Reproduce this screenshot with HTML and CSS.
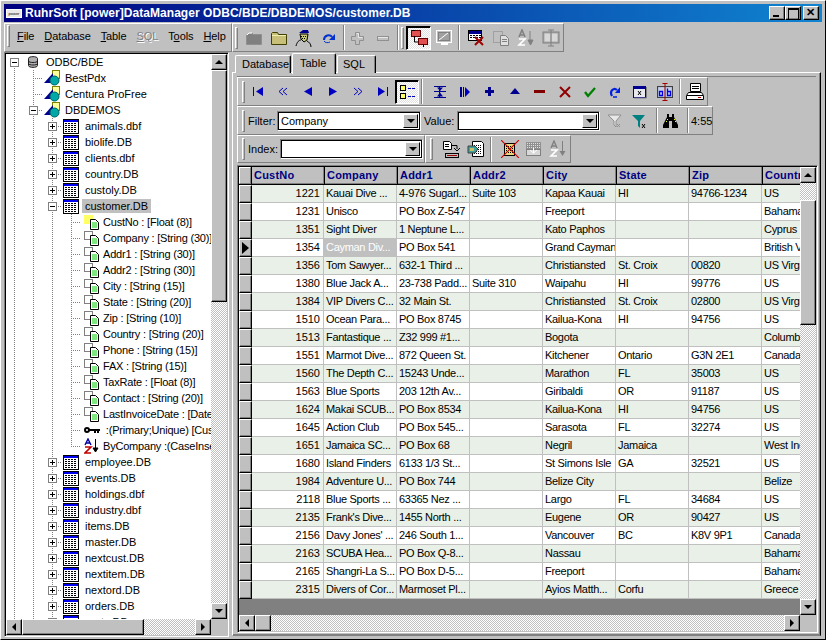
FILE: index.html
```html
<!DOCTYPE html>
<html lang="en">
<head>
<meta charset="utf-8">
<title>RuhrSoft [power]DataManager</title>
<link rel="stylesheet" href="styles.css">
</head>
<body>
<svg class="defs" xmlns="http://www.w3.org/2000/svg">
<symbol id="db" viewBox="0 0 10 12"><path d="M.5 2.500C.5 0 9.500 0 9.500 2.500v7c0 2.500-9 2.500-9 0z" fill="#b0b0b0" stroke="#202020"/><path d="M.5 5c0 2 9 2 9 0M.5 7.500c0 2 9 2 9 0" fill="none" stroke="#202020"/></symbol>
<symbol id="srv" viewBox="0 0 16 16"><rect x="8.500" y="0.500" width="7" height="8" fill="#ffff99" stroke="#808000"/><path d="M0 13 9 3v10z" fill="#000090"/><circle cx="10.500" cy="10.500" r="4.500" fill="#00a8a8" stroke="#006060"/></symbol>
<symbol id="tbl" viewBox="0 0 16 16"><rect x="0.500" y="1.500" width="15" height="14" fill="#fff" stroke="#000"/><rect x="1" y="2" width="14" height="2" fill="#0000f0"/><path d="M2 5.500h12M2 7.500h12M2 9.500h12M2 11.500h12M2 13.500h12" stroke="#000" stroke-dasharray="2 1"/></symbol>
<symbol id="fld" viewBox="0 0 16 16"><rect x="0.500" y="1.500" width="8" height="8" fill="none" stroke="#000" stroke-dasharray="1 1"/><path d="M6.500 5.500h5l3 3v7h-8z" fill="#fff" stroke="#000"/><path d="M8 9h5M8 11h5M8 13h5" stroke="#00d000" stroke-width="1.200"/></symbol>
<symbol id="fldy" viewBox="0 0 16 16"><rect x="0" y="1" width="9" height="9" fill="#ffff66"/><path d="M6.500 5.500h5l3 3v7h-8z" fill="#fff" stroke="#000"/><path d="M8 9h5M8 11h5M8 13h5" stroke="#00d000" stroke-width="1.200"/></symbol>
<symbol id="key" viewBox="0 0 16 16"><circle cx="3" cy="8" r="2" fill="none" stroke="#000" stroke-width="2"/><path d="M5 7h11v2h-1v2h-2V9h-1v2h-2V9H5z"/></symbol>
<symbol id="azt" viewBox="0 0 16 16"><path d="M1 7 4 1l3 6M2.500 5h3" fill="none" stroke="#0000a0" stroke-width="1.400"/><path d="M1 9h6L1 15h6" fill="none" stroke="#c00000" stroke-width="1.600"/><path d="M11.500 1v10M9 10h5l-2.500 4z" stroke="#000"/></symbol>
<symbol id="fgray" viewBox="0 0 18 18"><path d="M1.500 6.500l2-2h4l1 1h8v10h-15z" fill="#808080" stroke="#909090"/><path d="M2 6 4 4h3" fill="none" stroke="#fff"/></symbol>
<symbol id="fopen" viewBox="0 0 18 18"><path d="M1.500 4.500l1-1h5l1 2h8v10h-15z" fill="#c8c078" stroke="#404000"/><path d="M2 6.500h14" stroke="#f0f0b0"/></symbol>
<symbol id="man" viewBox="0 0 18 18"><path d="M4 4 8 1h5l1 3z" fill="#000090"/><path d="M5 5h8l-1 6-3 2-3-3z" fill="#c8c878" stroke="#000"/><path d="M6 7.500h5M7 9.500h4" stroke="#000" stroke-dasharray="1 1"/><path d="M1 17c1-4 3-6 5-6M12 12c2 1 4 3 4 6" fill="none" stroke="#000"/></symbol>
<symbol id="redo" viewBox="0 0 16 16"><path d="M3 10C3 5 9 4 11 7" fill="none" stroke="#0030d0" stroke-width="2"/><path d="M14 4v6H8z" fill="#0030d0"/><path d="M3 11c1 2 4 2 6 1" fill="none" stroke="#0030d0"/></symbol>
<symbol id="pdis" viewBox="0 0 16 16"><path d="M5.500 2.500h4v4h4v4h-4v4h-4v-4h-4v-4h4z" fill="#c0c0c0" stroke="#909090"/><path d="M6.500 3.500h2v4h4" fill="none" stroke="#e8e8e8"/></symbol>
<symbol id="mdis" viewBox="0 0 16 16"><rect x="2.500" y="6.500" width="11" height="4" fill="#c0c0c0" stroke="#909090"/><path d="M3 7.500h10" stroke="#e8e8e8"/></symbol>
<symbol id="ftree" viewBox="0 0 18 18"><rect x="1.500" y="1.500" width="9" height="6" fill="#e05050" stroke="#600000"/><rect x="8.500" y="9.500" width="9" height="6" fill="#e05050" stroke="#600000"/><path d="M4.500 7v6H8M13.500 15v3M2 1.500h3" fill="none" stroke="#000"/></symbol>
<symbol id="mon" viewBox="0 0 18 18"><rect x="1.500" y="1.500" width="15" height="12" fill="#c0c0c0" stroke="#fff"/><rect x="3.500" y="3.500" width="11" height="8" fill="#a0a0a0" stroke="#808080"/><path d="M4 11 13 4" stroke="#fff"/><path d="M6 15h7" stroke="#fff" stroke-width="2"/></symbol>
<symbol id="tblx" viewBox="0 0 18 18"><rect x="1.500" y="1.500" width="13" height="10" fill="#fff" stroke="#000"/><rect x="2" y="2" width="12" height="3" fill="#000090"/><path d="M3 6.500h11M3 8.500h11" stroke="#000" stroke-dasharray="2 1"/><path d="M8 8l8 8M16 8l-8 8" stroke="#a00000" stroke-width="2"/></symbol>
<symbol id="ddis" viewBox="0 0 18 18"><rect x="1.500" y="2.500" width="9" height="11" fill="none" stroke="#808080" stroke-dasharray="1 1"/><path d="M8.500 6.500h5l3 3v7h-8z" fill="#e0e0e0" stroke="#808080"/><path d="M10 10.500h5M10 12.500h5" stroke="#808080"/></symbol>
<symbol id="azd" viewBox="0 0 18 18"><path d="M2 8 5 1l3 7M3 6h4" fill="none" stroke="#808080" stroke-width="1.600"/><path d="M2 10h6l-6 6h6" fill="none" stroke="#fff" stroke-width="1.600"/><path d="M13 2v10M11 11h5l-2.500 5z" stroke="#808080" fill="#808080"/></symbol>
<symbol id="abd" viewBox="0 0 18 18"><rect x="1" y="3" width="16" height="11" fill="#a8a8a8" stroke="#808080"/><rect x="2.500" y="4.500" width="6" height="8" fill="#d8d8d8"/><rect x="9.500" y="4.500" width="6" height="8" fill="#d8d8d8"/><path d="M9 1v16M6 17h6M6 1h6" stroke="#808080"/></symbol>
<symbol id="first" viewBox="0 0 12 12"><path d="M1 1h1v9H1zM11 1v9L4 5.500z" fill="#0000c0"/></symbol>
<symbol id="prior" viewBox="0 0 12 12"><path d="M6 2 2 5.500 6 9M10 2 6 5.500 10 9" fill="none" stroke="#0000c0"/></symbol>
<symbol id="prev" viewBox="0 0 12 12"><path d="M10 1v9L2 5.500z" fill="#0000c0"/></symbol>
<symbol id="nxt" viewBox="0 0 12 12"><path d="M2 1v9l8-4.500z" fill="#0000c0"/></symbol>
<symbol id="nxtp" viewBox="0 0 12 12"><path d="M2 2 6 5.500 2 9M6 2l4 3.500L6 9" fill="none" stroke="#0000c0"/></symbol>
<symbol id="last" viewBox="0 0 12 12"><path d="M1 1v9l7-4.500zM10 1h1v9h-1z" fill="#0000c0"/></symbol>
<symbol id="tmark" viewBox="0 0 18 18"><rect x="2.500" y="2.500" width="5" height="5" fill="#ffff66" stroke="#000"/><rect x="2.500" y="10.500" width="5" height="5" fill="#ffff66" stroke="#000"/><path d="M10 5.500h7M10 13.500h7" stroke="#0000c0" stroke-dasharray="3 1"/></symbol>
<symbol id="ins" viewBox="0 0 16 16"><path d="M2 2.500h12M2 13.500h12M2 7.500h12" stroke="#000090"/><path d="M5 3.500h6L8 7zM5 12.500h6L8 8.500z" fill="#000090"/><path d="M7.500 2v12" stroke="#000090"/></symbol>
<symbol id="skip" viewBox="0 0 16 16"><path d="M3 3h2v10H3zM6 3h1v10H6z" fill="#000090"/><path d="M8 3v10l5-5z" fill="#0000c0"/></symbol>
<symbol id="add" viewBox="0 0 16 16"><path d="M6 3h3v3h3v3H9v3H6V9H3V6h3z" fill="#000090"/></symbol>
<symbol id="up" viewBox="0 0 16 16"><path d="M8 4 3 10h10z" fill="#000090"/></symbol>
<symbol id="del" viewBox="0 0 16 16"><rect x="2" y="6" width="11" height="3" fill="#800000"/></symbol>
<symbol id="cancel" viewBox="0 0 16 16"><path d="M3 3l10 10M13 3 3 13" stroke="#900000" stroke-width="2"/></symbol>
<symbol id="ok" viewBox="0 0 16 16"><path d="M3 8l3 4 7-8" fill="none" stroke="#008000" stroke-width="2.300"/></symbol>
<symbol id="ref" viewBox="0 0 16 16"><path d="M5 12C2 7 7 3 10 6" fill="none" stroke="#0020e0" stroke-width="2.200"/><path d="M13 3v6H8z" fill="#0020e0"/><path d="M6 13h4" stroke="#0020e0" stroke-width="1.500"/></symbol>
<symbol id="winx" viewBox="0 0 16 16"><rect x="1.500" y="2.500" width="12" height="11" fill="#e8e8f0" stroke="#000090"/><rect x="1" y="2" width="13" height="3" fill="#000090"/><path d="M6 7l3 4M9 7l-3 4" stroke="#000"/><path d="M14.500 3v11H2" fill="none" stroke="#808080"/></symbol>
<symbol id="ab" viewBox="0 0 18 18"><rect x="1.500" y="3.500" width="15" height="11" fill="#a0b0d0" stroke="#404040"/><rect x="2.500" y="4.500" width="6" height="9" fill="#c8d0e8"/><rect x="9.500" y="4.500" width="6" height="9" fill="#c8d0e8"/><path d="M9 0v18M6.500 .5h5M6.500 17.500h5" stroke="#a00000"/><path d="M3.500 8.500h3v4h-3zM11.500 5.500v7h3v-4h-3" fill="none" stroke="#0000e0" stroke-width="1.300"/></symbol>
<symbol id="prn" viewBox="0 0 20 20"><path d="M5.500 1.500h10v8h-10z" fill="#fff" stroke="#000"/><path d="M7 4.500h7M7 6.500h7" stroke="#000"/><path d="M3.500 10.500h13l2 3v4h-17v-4z" fill="#fff" stroke="#000"/><path d="M2 13.500h16" stroke="#000"/><path d="M13 15.500h3" stroke="#c00000"/></symbol>
<symbol id="fdis" viewBox="0 0 16 16"><path d="M1 2h13L9 8v6l-2-2V8z" fill="#e8e8e8" stroke="#909090"/><path d="M10 11l3 3M13 11l-3 3" stroke="#909090"/></symbol>
<symbol id="fen" viewBox="0 0 16 16"><path d="M0 2h13L8 8v7l-2-2V8z" fill="#008080"/><path d="M10 11l3 4M13 11l-3 4" stroke="#000"/></symbol>
<symbol id="bin" viewBox="0 0 16 16"><path d="M4 1h2v3h3V1h2v3l4 8v3H9V8H6v7H0v-3l4-8z" fill="#000"/><path d="M4 6h1v1H4zM11 6h1v1h-1zM3 8h1v1H3zM12 8h1v1h-1z" fill="#ff0"/></symbol>
<symbol id="idx1" viewBox="0 0 18 18"><path d="M1.500 1.500h6l2 2v6h-8z" fill="#fff" stroke="#000"/><path d="M3 4.500h4M3 6.500h4" stroke="#000"/><path d="M10 5.500h5V9M12 8l3 3 3-3" fill="none" stroke="#000"/><rect x="3.500" y="13.500" width="13" height="4" fill="#c0c0c0" stroke="#000"/><path d="M5 15.500h10" stroke="#a00000"/></symbol>
<symbol id="idx2" viewBox="0 0 18 18"><path d="M5.500 1.500h9l2 2v13h-11z" fill="#fff" stroke="#000"/><path d="M7 5.500h8M7 7.500h8M7 9.500h8M7 11.500h8M7 13.500h8" stroke="#000" stroke-dasharray="1 1"/><path d="M1 6h7l3 3-3 4H1z" fill="#40a0a0" stroke="#404040"/><path d="M3 8h4v3H3z" fill="#c8c060"/></symbol>
<symbol id="idx3" viewBox="0 0 18 18"><rect x="3.500" y="3.500" width="10" height="12" fill="#e8d880" stroke="#000"/><path d="M5 6.500h7M5 8.500h7M5 10.500h7M5 12.500h7" stroke="#000" stroke-dasharray="1 1"/><path d="M0 0l18 18M18 0 0 18" stroke="#d00000" stroke-width="1.200"/></symbol>
<symbol id="idx4" viewBox="0 0 18 18"><rect x="1" y="2" width="15" height="7" fill="#909090"/><path d="M2 3.500h13M2 5.500h13M2 7.500h13" stroke="#e0e0e0" stroke-dasharray="1 1"/><rect x="1.500" y="9.500" width="14" height="6" fill="#d8d8d8" stroke="#808080"/><path d="M8.500 8v5M5 10l3.500 3 3.500-3" fill="none" stroke="#fff"/></symbol>
<symbol id="idx5" viewBox="0 0 18 18"><path d="M2 8 5 1l3 7M3 6h4" fill="none" stroke="#808080" stroke-width="1.400"/><path d="M2 10h6l-6 6h6" fill="none" stroke="#fff" stroke-width="1.600"/><path d="M13.500 1v11" stroke="#808080"/><path d="M10.500 11h6l-3 5z" fill="#808080"/></symbol>
</svg>

<div class="win">
  <div class="title">
    <span class="logo">power</span>
    <span class="cap">RuhrSoft [power]DataManager ODBC/BDE/DBDEMOS/customer.DB</span>
    <span class="wbtns"><b class="wb wmin"></b><b class="wb wmax"></b><b class="wb wcl gap"></b></span>
  </div>

  <div class="topbar">
    <div class="band bmenu"><i class="grip"></i>
      <span class="mi"><u>F</u>ile</span><span class="mi"><u>D</u>atabase</span><span class="mi"><u>T</u>able</span><span class="mi dis"><u>S</u>QL</span><span class="mi">T<u>o</u>ols</span><span class="mi"><u>H</u>elp</span>
    </div>
    <div class="band btool"><i class="grip"></i>
      <span class="tbtn first"><svg class="ico18"><use href="#fgray"/></svg></span>
      <span class="tbtn"><svg class="ico18"><use href="#fopen"/></svg></span>
      <span class="tbtn"><svg class="ico18"><use href="#man"/></svg></span>
      <span class="tbtn"><svg class="ico16"><use href="#redo"/></svg></span>
      <i class="sep"></i>
      <span class="tbtn"><svg class="ico16"><use href="#pdis"/></svg></span>
      <span class="tbtn"><svg class="ico16"><use href="#mdis"/></svg></span>
      <i class="sep"></i><i class="grip"></i>
      <span class="tbtn pressed"><svg class="ico18"><use href="#ftree"/></svg></span>
      <span class="tbtn"><svg class="ico18"><use href="#mon"/></svg></span>
      <i class="sep s3"></i>
      <span class="tbtn"><svg class="ico18"><use href="#tblx"/></svg></span>
      <span class="tbtn"><svg class="ico18"><use href="#ddis"/></svg></span>
      <span class="tbtn"><svg class="ico18"><use href="#azd"/></svg></span>
      <span class="tbtn"><svg class="ico18"><use href="#abd"/></svg></span>
    </div>
  </div>

  <div class="main">
    <div class="treewrap">
      <div class="treemid">
        <div class="tree">
          <div class="r l0"><i class="c dn"><b class="bx minus"></b></i><svg class="ic"><use href="#db"/></svg>ODBC/BDE</div>
          <div class="r l1"><i class="c v"></i><i class="c t"></i><svg class="ic"><use href="#srv"/></svg>BestPdx</div>
          <div class="r l1"><i class="c v"></i><i class="c t"></i><svg class="ic"><use href="#srv"/></svg>Centura ProFree</div>
          <div class="r l1"><i class="c v"></i><i class="c t"><b class="bx minus"></b></i><svg class="ic"><use href="#srv"/></svg>DBDEMOS</div>
          <div class="r l2"><i class="c v"></i><i class="c v"></i><i class="c t"><b class="bx plus"></b></i><svg class="ic"><use href="#tbl"/></svg>animals.dbf</div>
          <div class="r l2"><i class="c v"></i><i class="c v"></i><i class="c t"><b class="bx plus"></b></i><svg class="ic"><use href="#tbl"/></svg>biolife.DB</div>
          <div class="r l2"><i class="c v"></i><i class="c v"></i><i class="c t"><b class="bx plus"></b></i><svg class="ic"><use href="#tbl"/></svg>clients.dbf</div>
          <div class="r l2"><i class="c v"></i><i class="c v"></i><i class="c t"><b class="bx plus"></b></i><svg class="ic"><use href="#tbl"/></svg>country.DB</div>
          <div class="r l2"><i class="c v"></i><i class="c v"></i><i class="c t"><b class="bx plus"></b></i><svg class="ic"><use href="#tbl"/></svg>custoly.DB</div>
          <div class="r l2"><i class="c v"></i><i class="c v"></i><i class="c t"><b class="bx minus"></b></i><svg class="ic"><use href="#tbl"/></svg><span class="sel">customer.DB</span></div>
          <div class="r l3"><i class="c v"></i><i class="c v"></i><i class="c v"></i><i class="c t"></i><svg class="ic"><use href="#fldy"/></svg>CustNo : [Float (8)]</div>
          <div class="r l3"><i class="c v"></i><i class="c v"></i><i class="c v"></i><i class="c t"></i><svg class="ic"><use href="#fld"/></svg>Company : [String (30)]</div>
          <div class="r l3"><i class="c v"></i><i class="c v"></i><i class="c v"></i><i class="c t"></i><svg class="ic"><use href="#fld"/></svg>Addr1 : [String (30)]</div>
          <div class="r l3"><i class="c v"></i><i class="c v"></i><i class="c v"></i><i class="c t"></i><svg class="ic"><use href="#fld"/></svg>Addr2 : [String (30)]</div>
          <div class="r l3"><i class="c v"></i><i class="c v"></i><i class="c v"></i><i class="c t"></i><svg class="ic"><use href="#fld"/></svg>City : [String (15)]</div>
          <div class="r l3"><i class="c v"></i><i class="c v"></i><i class="c v"></i><i class="c t"></i><svg class="ic"><use href="#fld"/></svg>State : [String (20)]</div>
          <div class="r l3"><i class="c v"></i><i class="c v"></i><i class="c v"></i><i class="c t"></i><svg class="ic"><use href="#fld"/></svg>Zip : [String (10)]</div>
          <div class="r l3"><i class="c v"></i><i class="c v"></i><i class="c v"></i><i class="c t"></i><svg class="ic"><use href="#fld"/></svg>Country : [String (20)]</div>
          <div class="r l3"><i class="c v"></i><i class="c v"></i><i class="c v"></i><i class="c t"></i><svg class="ic"><use href="#fld"/></svg>Phone : [String (15)]</div>
          <div class="r l3"><i class="c v"></i><i class="c v"></i><i class="c v"></i><i class="c t"></i><svg class="ic"><use href="#fld"/></svg>FAX : [String (15)]</div>
          <div class="r l3"><i class="c v"></i><i class="c v"></i><i class="c v"></i><i class="c t"></i><svg class="ic"><use href="#fld"/></svg>TaxRate : [Float (8)]</div>
          <div class="r l3"><i class="c v"></i><i class="c v"></i><i class="c v"></i><i class="c t"></i><svg class="ic"><use href="#fld"/></svg>Contact : [String (20)]</div>
          <div class="r l3"><i class="c v"></i><i class="c v"></i><i class="c v"></i><i class="c t"></i><svg class="ic"><use href="#fld"/></svg>LastInvoiceDate : [Date</div>
          <div class="r l3"><i class="c v"></i><i class="c v"></i><i class="c v"></i><i class="c t"></i><svg class="ic"><use href="#key"/></svg>&nbsp;:(Primary;Unique) [Cust</div>
          <div class="r l3"><i class="c v"></i><i class="c v"></i><i class="c v"></i><i class="c e"></i><svg class="ic"><use href="#azt"/></svg>ByCompany :(CaseInse</div>
          <div class="r l2"><i class="c v"></i><i class="c v"></i><i class="c t"><b class="bx plus"></b></i><svg class="ic"><use href="#tbl"/></svg>employee.DB</div>
          <div class="r l2"><i class="c v"></i><i class="c v"></i><i class="c t"><b class="bx plus"></b></i><svg class="ic"><use href="#tbl"/></svg>events.DB</div>
          <div class="r l2"><i class="c v"></i><i class="c v"></i><i class="c t"><b class="bx plus"></b></i><svg class="ic"><use href="#tbl"/></svg>holdings.dbf</div>
          <div class="r l2"><i class="c v"></i><i class="c v"></i><i class="c t"><b class="bx plus"></b></i><svg class="ic"><use href="#tbl"/></svg>industry.dbf</div>
          <div class="r l2"><i class="c v"></i><i class="c v"></i><i class="c t"><b class="bx plus"></b></i><svg class="ic"><use href="#tbl"/></svg>items.DB</div>
          <div class="r l2"><i class="c v"></i><i class="c v"></i><i class="c t"><b class="bx plus"></b></i><svg class="ic"><use href="#tbl"/></svg>master.DB</div>
          <div class="r l2"><i class="c v"></i><i class="c v"></i><i class="c t"><b class="bx plus"></b></i><svg class="ic"><use href="#tbl"/></svg>nextcust.DB</div>
          <div class="r l2"><i class="c v"></i><i class="c v"></i><i class="c t"><b class="bx plus"></b></i><svg class="ic"><use href="#tbl"/></svg>nextitem.DB</div>
          <div class="r l2"><i class="c v"></i><i class="c v"></i><i class="c t"><b class="bx plus"></b></i><svg class="ic"><use href="#tbl"/></svg>nextord.DB</div>
          <div class="r l2"><i class="c v"></i><i class="c v"></i><i class="c t"><b class="bx plus"></b></i><svg class="ic"><use href="#tbl"/></svg>orders.DB</div>
          <div class="r l2"><i class="c v"></i><i class="c v"></i><i class="c t"><b class="bx plus"></b></i><svg class="ic"><use href="#tbl"/></svg>parts.DB</div>
        </div>
        <div class="vs treevs">
          <span class="sb"><i class="au"></i></span><span class="thumb tv"></span><span class="track"></span><span class="sb"><i class="ad"></i></span>
        </div>
      </div>
      <div class="hsrow">
        <div class="hs treehs"><span class="sb"><i class="al"></i></span><span class="thumb th"></span><span class="track"></span><span class="sb"><i class="ar"></i></span></div>
        <span class="corner"></span>
      </div>
    </div>

    <div class="right">
      <div class="tabs">
        <span class="tab t1">Database</span><span class="tab t2">Table</span><span class="tab t3">SQL</span>
      </div>
      <div class="page">
        <div class="rows">
          <div class="brow">
            <div class="band b1"><i class="grip"></i>
              <span class="nb"><svg class="ico12"><use href="#first"/></svg></span>
              <span class="nb"><svg class="ico12"><use href="#prior"/></svg></span>
              <span class="nb"><svg class="ico12"><use href="#prev"/></svg></span>
              <span class="nb"><svg class="ico12"><use href="#nxt"/></svg></span>
              <span class="nb"><svg class="ico12"><use href="#nxtp"/></svg></span>
              <span class="nb"><svg class="ico12"><use href="#last"/></svg></span>
              <span class="nb pressed"><svg class="ico18"><use href="#tmark"/></svg></span>
              <i class="sep"></i>
              <span class="nb"><svg class="ico16"><use href="#ins"/></svg></span>
              <span class="nb"><svg class="ico16"><use href="#skip"/></svg></span>
              <span class="nb"><svg class="ico16"><use href="#add"/></svg></span>
              <span class="nb"><svg class="ico16"><use href="#up"/></svg></span>
              <span class="nb"><svg class="ico16"><use href="#del"/></svg></span>
              <span class="nb"><svg class="ico16"><use href="#cancel"/></svg></span>
              <span class="nb"><svg class="ico16"><use href="#ok"/></svg></span>
              <span class="nb"><svg class="ico16"><use href="#ref"/></svg></span>
              <span class="nb"><svg class="ico16"><use href="#winx"/></svg></span>
              <span class="nb"><svg class="ico18"><use href="#ab"/></svg></span>
              <i class="sep s2"></i>
              <span class="nb"><svg class="ico20"><use href="#prn"/></svg></span>
            </div>
          </div>
          <div class="brow">
            <div class="band b2"><i class="grip"></i>
              <span class="lbl lf">Filter:</span>
              <span class="combo cf"><span class="ct">Company</span><span class="cb"><i class="ad"></i></span></span>
              <span class="lbl lv">Value:</span>
              <span class="combo cv"><span class="ct"></span><span class="cb"><i class="ad"></i></span></span>
              <span class="nb n1"><svg class="ico16"><use href="#fdis"/></svg></span>
              <span class="nb"><svg class="ico16"><use href="#fen"/></svg></span>
              <i class="sep"></i>
              <span class="nb n2"><svg class="ico16"><use href="#bin"/></svg></span>
              <i class="sep"></i>
              <span class="lbl tm">4:55</span>
            </div>
          </div>
          <div class="brow">
            <div class="band b3"><i class="grip"></i>
              <span class="lbl lf">Index:</span>
              <span class="combo ci"><span class="ct"></span><span class="cb"><i class="ad"></i></span></span>
            </div>
            <div class="band b4"><i class="grip"></i>
              <span class="nb"><svg class="ico18"><use href="#idx1"/></svg></span>
              <span class="nb"><svg class="ico18"><use href="#idx2"/></svg></span>
              <i class="sep"></i>
              <span class="nb"><svg class="ico18"><use href="#idx3"/></svg></span>
              <span class="nb"><svg class="ico18"><use href="#idx4"/></svg></span>
              <span class="nb"><svg class="ico18"><use href="#idx5"/></svg></span>
            </div>
          </div>
        </div>

        <div class="gridwrap">
          <div class="gridmid">
            <div class="grid">
              <div class="gh"><span class="ind"></span><span>CustNo</span><span>Company</span><span>Addr1</span><span>Addr2</span><span>City</span><span>State</span><span>Zip</span><span>Country</span></div>
              <div class="gr"><span class="ind"></span><span>1221</span><span>Kauai Dive ...</span><span>4-976 Sugarl...</span><span>Suite 103</span><span>Kapaa Kauai</span><span>HI</span><span>94766-1234</span><span>US</span></div>
              <div class="gr"><span class="ind"></span><span>1231</span><span>Unisco</span><span>PO Box Z-547</span><span></span><span>Freeport</span><span></span><span></span><span>Bahamas</span></div>
              <div class="gr"><span class="ind"></span><span>1351</span><span>Sight Diver</span><span>1 Neptune L...</span><span></span><span>Kato Paphos</span><span></span><span></span><span>Cyprus</span></div>
              <div class="gr"><span class="ind cur"></span><span>1354</span><span class="hl">Cayman Div...</span><span>PO Box 541</span><span></span><span>Grand Cayman</span><span></span><span></span><span>British Virgin</span></div>
              <div class="gr"><span class="ind"></span><span>1356</span><span>Tom Sawyer...</span><span>632-1 Third ...</span><span></span><span>Christiansted</span><span>St. Croix</span><span>00820</span><span>US Virgin</span></div>
              <div class="gr"><span class="ind"></span><span>1380</span><span>Blue Jack A...</span><span>23-738 Padd...</span><span>Suite 310</span><span>Waipahu</span><span>HI</span><span>99776</span><span>US</span></div>
              <div class="gr"><span class="ind"></span><span>1384</span><span>VIP Divers C...</span><span>32 Main St.</span><span></span><span>Christiansted</span><span>St. Croix</span><span>02800</span><span>US Virgin</span></div>
              <div class="gr"><span class="ind"></span><span>1510</span><span>Ocean Para...</span><span>PO Box 8745</span><span></span><span>Kailua-Kona</span><span>HI</span><span>94756</span><span>US</span></div>
              <div class="gr"><span class="ind"></span><span>1513</span><span>Fantastique ...</span><span>Z32 999 #1...</span><span></span><span>Bogota</span><span></span><span></span><span>Columbia</span></div>
              <div class="gr"><span class="ind"></span><span>1551</span><span>Marmot Dive...</span><span>872 Queen St.</span><span></span><span>Kitchener</span><span>Ontario</span><span>G3N 2E1</span><span>Canada</span></div>
              <div class="gr"><span class="ind"></span><span>1560</span><span>The Depth C...</span><span>15243 Unde...</span><span></span><span>Marathon</span><span>FL</span><span>35003</span><span>US</span></div>
              <div class="gr"><span class="ind"></span><span>1563</span><span>Blue Sports</span><span>203 12th Av...</span><span></span><span>Giribaldi</span><span>OR</span><span>91187</span><span>US</span></div>
              <div class="gr"><span class="ind"></span><span>1624</span><span>Makai SCUB...</span><span>PO Box 8534</span><span></span><span>Kailua-Kona</span><span>HI</span><span>94756</span><span>US</span></div>
              <div class="gr"><span class="ind"></span><span>1645</span><span>Action Club</span><span>PO Box 545...</span><span></span><span>Sarasota</span><span>FL</span><span>32274</span><span>US</span></div>
              <div class="gr"><span class="ind"></span><span>1651</span><span>Jamaica SC...</span><span>PO Box 68</span><span></span><span>Negril</span><span>Jamaica</span><span></span><span>West Indies</span></div>
              <div class="gr"><span class="ind"></span><span>1680</span><span>Island Finders</span><span>6133 1/3 St...</span><span></span><span>St Simons Isle</span><span>GA</span><span>32521</span><span>US</span></div>
              <div class="gr"><span class="ind"></span><span>1984</span><span>Adventure U...</span><span>PO Box 744</span><span></span><span>Belize City</span><span></span><span></span><span>Belize</span></div>
              <div class="gr"><span class="ind"></span><span>2118</span><span>Blue Sports ...</span><span>63365 Nez ...</span><span></span><span>Largo</span><span>FL</span><span>34684</span><span>US</span></div>
              <div class="gr"><span class="ind"></span><span>2135</span><span>Frank's Dive...</span><span>1455 North ...</span><span></span><span>Eugene</span><span>OR</span><span>90427</span><span>US</span></div>
              <div class="gr"><span class="ind"></span><span>2156</span><span>Davy Jones' ...</span><span>246 South 1...</span><span></span><span>Vancouver</span><span>BC</span><span>K8V 9P1</span><span>Canada</span></div>
              <div class="gr"><span class="ind"></span><span>2163</span><span>SCUBA Hea...</span><span>PO Box Q-8...</span><span></span><span>Nassau</span><span></span><span></span><span>Bahamas</span></div>
              <div class="gr"><span class="ind"></span><span>2165</span><span>Shangri-La S...</span><span>PO Box D-5...</span><span></span><span>Freeport</span><span></span><span></span><span>Bahamas</span></div>
              <div class="gr"><span class="ind"></span><span>2315</span><span>Divers of Cor...</span><span>Marmoset Pl...</span><span></span><span>Ayios Matth...</span><span>Corfu</span><span></span><span>Greece</span></div>
            </div>
            <div class="vs gridvs">
              <span class="sb"><i class="au"></i></span><span class="track t0"></span><span class="thumb gv"></span><span class="track"></span><span class="sb"><i class="ad"></i></span>
            </div>
          </div>
          <div class="hsrow">
            <div class="hs gridhs"><span class="sb"><i class="al"></i></span><span class="thumb gt"></span><span class="track"></span><span class="sb"><i class="ar"></i></span></div>
            <span class="corner"></span>
          </div>
        </div>
      </div>
    </div>
  </div>
</div>
</body>
</html>
```

FILE: styles.css
```css
* { box-sizing: border-box; }
html, body { margin: 0; padding: 0; }
body {
  width: 826px; height: 640px; overflow: hidden;
  background: #c0c0c0;
  font: 11px "Liberation Sans", Arial, sans-serif;
  color: #000;
}
.defs { display: none; }
svg { display: block; flex: none; }
.win {
  width: 826px; height: 640px;
  padding: 3px 3px 0 3px;
  display: flex; flex-direction: column;
  border: 1px solid; border-color: #fff #000 #000 #fff;
  background: #c0c0c0;
}
.title {
  height: 18px; flex: none; display: flex; align-items: center;
  background: linear-gradient(90deg, #000080, #1084d0);
  color: #fff; font-weight: bold; font-size: 12px;
}
.logo {
  width: 16px; height: 9px; margin: 0 3px 0 2px; background: #e8e8e8;
  border: 1px solid #fff; color: #000; font-size: 4px; line-height: 7px; text-align: center; overflow: hidden; font-weight: normal;
}
.cap { letter-spacing: .05px; white-space: nowrap; }
.wbtns { margin-left: auto; display: flex; padding-right: 3px; }
.wb {
  display: block; width: 16px; height: 14px; background: #c0c0c0;
  border: 1px solid; border-color: #fff #000 #000 #fff;
  box-shadow: inset -1px -1px 0 #808080;
  position: relative;
}
.wb.gap { margin-left: 2px; }
.wmin::after { content: ""; position: absolute; left: 3px; bottom: 2px; width: 6px; height: 2px; background: #000; }
.wmax::after { content: ""; position: absolute; left: 2px; top: 1px; width: 9px; height: 9px; border: 1px solid #000; border-top-width: 2px; }
.wcl::after { content: "\2715"; position: absolute; left: 0; top: -1px; width: 13px; text-align: center; font-size: 11px; line-height: 13px; color: #000; font-weight: bold; }

.topbar { display: flex; height: 29px; margin-top: 1px; flex: none; }
.band {
  display: flex; align-items: center;
  border: 1px solid; border-color: #fff #808080 #808080 #fff;
}
.grip {
  display: block; flex: none; width: 3px; height: 22px; margin-left: 2px;
  border: 1px solid; border-color: #fff #808080 #808080 #fff;
}
.sep {
  display: block; flex: none; width: 2px; height: 25px;
  border-left: 1px solid #808080; border-right: 1px solid #fff;
}
.bmenu { width: 228px; padding: 0 4px 4px 0; }
.mi { margin-left: 10px; letter-spacing: -.1px; }
.mi:nth-of-type(1) { margin-left: 7px; }
.mi.dis { color: #808080; text-shadow: 1px 1px 0 #fff; }
.btool { width: 332px; }
.tbtn { width: 25px; height: 24px; flex: none; display: flex; align-items: center; justify-content: center; }
.tbtn.first { margin-left: 3px; }
.btool .sep { margin-left: 2px; }
.btool .sep + .grip { margin-left: 2px; margin-right: 2px; }
.btool .s3 { margin-left: 2px; margin-right: 3px; }
.pressed {
  background: repeating-conic-gradient(#fff 0 25%, #e0e0e0 0 50%) 0 0/2px 2px;
  border: 1px solid; border-color: #000 #fff #fff #000;
  box-shadow: inset 1px 1px 0 #000;
}
.ico12 { width: 12px; height: 12px; }
.ico16 { width: 16px; height: 16px; }
.ico18 { width: 18px; height: 18px; }
.ico20 { width: 20px; height: 20px; }

.main { flex: 1; display: flex; min-height: 0; }
.treewrap {
  width: 225px; height: 585px; flex: none;
  border: 1px solid; border-color: #808080 #fff #fff #808080;
  display: flex; flex-direction: column;
  box-shadow: inset 1px 1px 0 #000, inset -1px -1px 0 #c0c0c0;
  padding: 1px;
}
.treemid { flex: 1; display: flex; min-height: 0; }
.tree { flex: 1; min-width: 0; background: #fff; overflow: hidden; }
.r { height: 16px; display: flex; align-items: center; white-space: nowrap; margin-left: -1px; }
.c {
  display: flex; align-items: center; justify-content: center;
  flex: none; width: 19px; height: 16px;
  background-repeat: no-repeat;
}
.v { background-image: repeating-linear-gradient(#808080 0 1px, transparent 1px 2px); background-size: 1px 16px; background-position: 9px 0; }
.t {
  background-image: repeating-linear-gradient(#808080 0 1px, transparent 1px 2px), repeating-linear-gradient(90deg, #808080 0 1px, transparent 1px 2px);
  background-size: 1px 16px, 10px 1px; background-position: 9px 0, 9px 8px;
}
.e {
  background-image: repeating-linear-gradient(#808080 0 1px, transparent 1px 2px), repeating-linear-gradient(90deg, #808080 0 1px, transparent 1px 2px);
  background-size: 1px 8px, 10px 1px; background-position: 9px 0, 9px 8px;
}
.dn { background-image: repeating-linear-gradient(#808080 0 1px, transparent 1px 2px); background-size: 1px 8px; background-position: 9px 8px; }
.bx { display: block; width: 9px; height: 9px; border: 1px solid #808080; background-color: #fff; background-repeat: no-repeat; }
.minus { background-image: linear-gradient(#000, #000); background-size: 5px 1px; background-position: center; }
.plus { background-image: linear-gradient(#000, #000), linear-gradient(#000, #000); background-size: 5px 1px, 1px 5px; background-position: center, center; }
.ic { width: 16px; height: 16px; }
.l0 .ic { width: 10px; height: 12px; margin: 0 8px 0 4px; }
.l1 .ic { margin: 0 5px 0 1px; }
.l2 .ic { margin: 0 6px 0 1px; }
.l3 .ic { margin: 0 3px 0 3px; }
.l3 { letter-spacing: -.2px; }
.sel { background: #c0c0c0; padding: 1px 3px; margin-left: -3px; }

.vs { display: flex; flex-direction: column; flex: none; width: 16px; }
.hs { display: flex; flex: 1; height: 16px; min-width: 0; }
.hsrow { display: flex; flex: none; }
.corner { flex: none; width: 16px; height: 16px; background: #c0c0c0; }
.sb {
  flex: none; width: 16px; height: 16px; display: flex; align-items: center; justify-content: center;
  background: #c0c0c0; border: 1px solid; border-color: #fff #000 #000 #fff;
  box-shadow: inset -1px -1px 0 #808080;
}
.thumb {
  flex: none; background: #c0c0c0; border: 1px solid; border-color: #fff #000 #000 #fff;
  box-shadow: inset -1px -1px 0 #808080;
}
.track { flex: 1; background: repeating-conic-gradient(#fff 0 25%, #c0c0c0 0 50%) 0 0/2px 2px; }
.tv { height: 232px; }
.th { width: 122px; }
.t0 { flex: none; height: 17px; }
.gv { height: 125px; }
.gt { width: 16px; }
.au, .ad, .al, .ar { display: block; width: 0; height: 0; border-style: solid; border-color: transparent; }
.au { border-width: 0 4px 4px; border-bottom-color: #000; }
.ad { border-width: 4px 4px 0; border-top-color: #000; }
.al { border-width: 4px 4px 4px 0; border-right-color: #000; }
.ar { border-width: 4px 0 4px 4px; border-left-color: #000; }

.right { flex: 1; min-width: 0; display: flex; flex-direction: column; padding-left: 3px; }
.tabs { display: flex; height: 21px; flex: none; padding-left: 3px; align-items: flex-end; position: relative; z-index: 1; margin-bottom: -1px; }
.tab {
  display: flex; align-items: center; height: 18px; padding-left: 6px; padding-bottom: 1px;
  border: 1px solid; border-bottom: 0; border-color: #fff #000 #000 #fff; border-radius: 2px 2px 0 0;
  background: #c0c0c0; box-shadow: inset -1px 0 0 #808080;
}
.t1 { width: 56px; }
.t2 { width: 44px; height: 21px; padding-left: 7px; padding-bottom: 3px; margin: 0 0 -1px 1px; }
.t3 { width: 39px; margin-left: 1px; padding-left: 5px; }
.page {
  width: 589px; height: 564px; flex: none;
  border: 1px solid; border-color: #fff #000 #808080 #fff;
  box-shadow: inset -1px -1px 0 #808080;
  padding: 3px 4px 3px 4px;
  display: flex; flex-direction: column;
}
.rows { flex: none; border-top: 1px solid #808080; margin-bottom: 2px; }
.brow { display: flex; }
.b1 { width: 471px; height: 29px; }
.b1 .grip, .b2 .grip, .b3 .grip, .b4 .grip { margin-left: 4px; }
.nb { width: 25px; height: 24px; flex: none; display: flex; align-items: center; justify-content: center; }
.b1 .pressed { width: 24px; }
.b1 .sep { margin: 0 4px 0 2px; }
.b1 .sep.s2 { margin: 0 1px 0 2px; }
.b2 { width: 476px; height: 29px; }
.b3 { width: 188px; height: 28px; }
.b4 { width: 146px; height: 28px; }
.b4 .nb { width: 24px; }
.b4 .nb:nth-of-type(1) { margin-left: 4px; width: 27px; }
.b4 .sep { margin: 0 6px 0 2px; }
.lbl { flex: none; }
.lf { margin-left: 3px; width: 29px; }
.b3 .lf { width: 32px; }
.lv { margin-left: 3px; width: 33px; }
.combo {
  flex: none; height: 20px; display: flex; background: #fff;
  border: 1px solid; border-color: #808080 #fff #fff #808080;
  box-shadow: inset 1px 1px 0 #000, inset -1px -1px 0 #000;
  padding: 2px; align-items: stretch;
}
.ct { flex: 1; padding-left: 1px; line-height: 15px; }
.cb {
  flex: none; width: 15px; display: flex; align-items: center; justify-content: center;
  background: #c0c0c0; border: 1px solid; border-color: #fff #000 #000 #fff;
}
.cf { width: 144px; }
.cv { width: 143px; }
.ci { width: 143px; }
.n1 { margin-left: 2px; }
.b2 .sep { margin: 0 0 0 4px; }
.tm { margin-left: 2px; }

.gridwrap {
  flex: none; width: 581px; height: 468px;
  border: 1px solid; border-color: #808080 #fff #fff #808080;
  padding: 1px;
  box-shadow: inset 1px 1px 0 #000;
  display: flex; flex-direction: column;
}
.gridmid { flex: 1; display: flex; min-height: 0; }
.grid { flex: 1; min-width: 0; background: #808080; overflow: hidden; }
.gh, .gr { display: flex; white-space: nowrap; }
.gh { height: 18px; background: #000; gap: 1px; border-bottom: 1px solid #000; }
.gh > span {
  flex: none; width: 72px; height: 17px; background: #c0c0c0; color: #000080; font-weight: bold;
  line-height: 16px; padding-left: 2px; letter-spacing: .2px; overflow: hidden;
  border: 1px solid; border-color: #fff #808080 #808080 #fff;
  border-width: 0 1px 1px 0;
}
.gr { height: 18px; background: #fff; letter-spacing: -.3px; }
.gr:nth-child(even) { background: #e8f0e8; }
.gr > span {
  flex: none; width: 73px; height: 18px; line-height: 17px; padding-left: 2px; overflow: hidden;
  border-right: 1px solid #c0c0c0; border-bottom: 1px solid #c0c0c0;
}
.gr > span:nth-child(2) { width: 72px; text-align: right; padding-right: 3px; letter-spacing: 0; }
.gh > span.ind { width: 12px; border-width: 1px; border-color: #fff #808080 #808080 #fff; }
.gr > span.ind {
  width: 13px; background: #c0c0c0; padding: 0;
  border: 1px solid; border-color: #fff #000 #000 #fff;
  box-shadow: inset -1px -1px 0 #808080;
  display: flex; align-items: center; justify-content: center;
}
.cur::before { content: ""; border-style: solid; border-width: 6px 0 6px 7px; border-color: transparent transparent transparent #000; }
.gr > span.hl { background: #c0c0c0; color: #fff; }
```
